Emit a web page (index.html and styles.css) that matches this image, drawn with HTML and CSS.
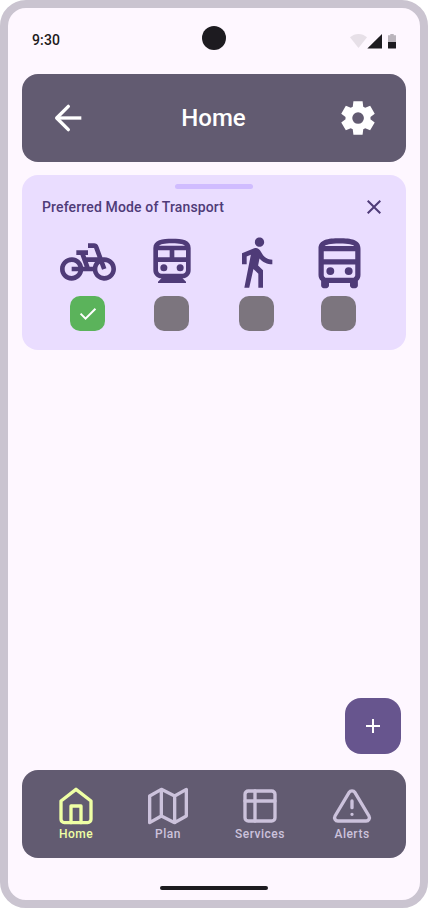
FILE: index.html
```html
<!DOCTYPE html>
<html lang="en">
<head>
<meta charset="utf-8">
<meta name="viewport" content="width=device-width">
<title>Home</title>
<link rel="stylesheet" href="styles.css">
</head>
<body>
<div class="phone">
  <div class="status">
    <span class="time">9:30</span>
    <span class="camera"></span>
    <svg class="status-icons" width="46" height="16" viewBox="0 0 46 16">
      <path d="M0 4.2C2.4 2.1 5.400 .9 8.500 .9s6.100 1.200 8.500 3.300L8.500 15z" fill="#1d1b20" fill-opacity=".1"/>
      <path d="M17.300 15.500L32 1v14.500z" fill="#1d1b20"/>
      <path d="M38 2.300h2.300V1h3.400v1.300H46V9h-8z" fill="#1d1b20" fill-opacity=".3"/>
      <path d="M38 9h8v6q0 .5-.5.5h-7q-.5 0-.5-.5z" fill="#1d1b20"/>
    </svg>
  </div>

  <header class="header">
    <svg width="40" height="40" viewBox="0 0 24 24" fill="none" stroke="currentColor" stroke-width="2" stroke-linejoin="round"><path d="M12.200 5l-7 7 7 7" stroke-linecap="round"/><path d="M5.500 12H20"/></svg>
    <h1>Home</h1>
    <svg width="40" height="40" viewBox="0 -960 960 960" fill="currentColor"><path d="m370-80-16-128q-13-5-24.500-12T307-235l-119 50L78-375l103-78q-1-7-1-13.500v-27q0-6.500 1-13.500L78-585l110-190 119 50q11-8 23-15t24-12l16-128h220l16 128q13 5 24.500 12t22.500 15l119-50 110 190-103 78q1 7 1 13.500v27q0 6.500-2 13.500l103 78-110 190-118-50q-11 8-23 15t-24 12L590-80H370Zm112-260q58 0 99-41t41-99q0-58-41-99t-99-41q-59 0-99.500 41T342-480q0 58 40.500 99t99.500 41Z"/></svg>
  </header>

  <section class="card">
    <div class="handle"></div>
    <div class="card-head">
      <h2>Preferred Mode of Transport</h2>
      <svg width="24" height="24" viewBox="0 0 24 24" fill="currentColor"><path d="M19 6.410L17.590 5 12 10.590 6.410 5 5 6.410 10.590 12 5 17.590 6.410 19 12 13.410 17.590 19 19 17.590 13.410 12z"/></svg>
    </div>
    <div class="modes">
      <div class="mode">
        <div class="glyph"><svg width="56" height="56" viewBox="0 0 24 24" fill="currentColor"><path d="M18.180 10l-1.700-4.680C16.190 4.530 15.440 4 14.600 4H12v2h2.600l1.460 4h-4.810l-.36-1H12V7H7v2h1.750l1.820 5H9.900c-.44-2.230-2.310-3.880-4.650-3.990C2.450 9.870 0 12.200 0 15c0 2.800 2.200 5 5 5 2.460 0 4.450-1.690 4.900-4h4.200c.44 2.230 2.310 3.880 4.650 3.990 2.800.13 5.250-2.190 5.250-5 0-2.800-2.200-5-5-5h-.82zM7.820 16c-.4 1.170-1.490 2-2.820 2-1.680 0-3-1.320-3-3s1.320-3 3-3c1.330 0 2.420.83 2.820 2H5v2h2.820zm6.280-2h-1.400l-.73-2H15c-.44.58-.76 1.250-.9 2zm4.900 4c-1.680 0-3-1.320-3-3 0-.93.41-1.730 1.050-2.280l.96 2.640 1.880-.68-.97-2.670c.02 0 .05-.01.08-.01 1.680 0 3 1.320 3 3s-1.320 3-3 3z"/></svg></div>
        <div class="box checked"><svg width="24" height="24" viewBox="0 -960 960 960" fill="currentColor"><path d="M382-240 154-468l57-57 171 171 367-367 57 57-424 424Z"/></svg></div>
      </div>
      <div class="mode">
        <div class="glyph"><svg width="56" height="56" viewBox="0 0 24 24" fill="currentColor"><path d="M12 2C8 2 4 2.500 4 6v9.500C4 17.430 5.570 19 7.500 19L6 20.500v.5h12v-.5L16.500 19c1.930 0 3.500-1.570 3.500-3.500V6c0-3.500-3.580-4-8-4zm0 2c3.510 0 4.960.48 5.570 1H6.430c.61-.52 2.060-1 5.570-1zM6 7h5v3H6V7zm12 8.500c0 .83-.67 1.500-1.500 1.500h-9c-.83 0-1.500-.67-1.500-1.500V12h12v3.500zm0-5.500h-5V7h5v3z"/><circle cx="8.500" cy="14.500" r="1.500"/><circle cx="15.500" cy="14.500" r="1.500"/></svg></div>
        <div class="box"></div>
      </div>
      <div class="mode">
        <div class="glyph walk"><svg width="56" height="56" viewBox="0 0 24 24" fill="currentColor"><path d="M13.500 5.500c1.100 0 2-.9 2-2s-.9-2-2-2-2 .9-2 2 .9 2 2 2zM9.800 8.900L7 23h2.100l1.800-8 2.100 2v6h2v-7.500l-2.100-2 .6-3C14.800 12 16.800 13 19 13v-2c-1.900 0-3.500-1-4.300-2.400l-1-1.600c-.4-.6-1-1-1.700-1-.3 0-.5.1-.8.1L6 8.300V13h2V9.600l1.800-.7"/></svg></div>
        <div class="box"></div>
      </div>
      <div class="mode">
        <div class="glyph bus"><svg width="63" height="63" viewBox="0 0 24 24" fill="currentColor"><path d="M12 2c-4.420 0-8 .5-8 4v10c0 .88.39 1.670 1 2.220V20c0 .55.45 1 1 1h1c.55 0 1-.45 1-1v-1h8v1c0 .55.45 1 1 1h1c.55 0 1-.45 1-1v-1.780c.61-.55 1-1.340 1-2.220V6c0-3.500-3.580-4-8-4zm5.660 2.990H6.340C6.890 4.460 8.310 4 12 4s5.110.46 5.660.99zm.34 2V10H6V6.990h12zm-.34 9.740l-.29.27H6.630l-.29-.27C6.210 16.620 6 16.370 6 16v-4h12v4c0 .37-.21.62-.34.73z"/><circle cx="8.500" cy="14.500" r="1.500"/><circle cx="15.500" cy="14.500" r="1.500"/></svg></div>
        <div class="box"></div>
      </div>
    </div>
  </section>

  <main class="content">
    <button class="fab" aria-label="Add"><svg width="24" height="24" viewBox="0 0 24 24" fill="currentColor"><path d="M19 13h-6v6h-2v-6H5v-2h6V5h2v6h6z"/></svg></button>
  </main>

  <nav class="nav">
    <a class="item active"><svg viewBox="0 0 24 24"><path d="M3 9l9-7 9 7v11a2 2 0 0 1-2 2H5a2 2 0 0 1-2-2z"/><path d="M9 22V12h6v10"/></svg><span>Home</span></a>
    <a class="item"><svg viewBox="0 0 24 24"><path d="M1 6v16l7-4 8 4 7-4V2l-7 4-8-4-7 4zM8 2v16M16 6v16"/></svg><span>Plan</span></a>
    <a class="item"><svg viewBox="0 0 24 24"><rect x="3" y="3" width="18" height="18" rx="2"/><path d="M3 9h18M9 3v18"/></svg><span>Services</span></a>
    <a class="item"><svg viewBox="0 0 24 24"><path d="M10.290 3.860L1.820 18a2 2 0 0 0 1.710 3h16.940a2 2 0 0 0 1.710-3L13.710 3.860a2 2 0 0 0-3.420 0zM12 9v4M12 17h.01"/></svg><span>Alerts</span></a>
  </nav>
  <div class="gesture"></div>
</div>
</body>
</html>
```
FILE: styles.css
```css
* { box-sizing: border-box; }
body { margin: 0; background: #fff; font-family: Roboto, sans-serif; }
h1, h2 { margin: 0; font-weight: 500; }
svg { display: block; flex: none; }

.phone {
  width: 428px;
  height: 908px;
  border: 8px solid #cac4d0;
  border-radius: 26px;
  background: #fef7ff;
  padding: 0 14px;
  display: flex;
  flex-direction: column;
}

.status {
  height: 66px;
  padding: 18px 10px 0;
  display: grid;
  grid-template-columns: 1fr 24px 1fr;
  align-items: start;
  color: #1d1b20;
}
.time { font-size: 14px; font-weight: 500; line-height: 20px; letter-spacing: .14px; padding-top: 4px; }
.camera { width: 24px; height: 24px; border-radius: 50%; background: #1d1b20; }
.status-icons { justify-self: end; margin-top: 7px; }

.header {
  height: 88px;
  border-radius: 16px;
  background: #625b71;
  color: #fff;
  padding: 0 28px 0 26px;
  display: flex;
  align-items: center;
  justify-content: space-between;
}
.header h1 { font-size: 24px; line-height: 32px; padding-left: 1px; }

.card {
  height: 175px;
  margin-top: 13px;
  border-radius: 16px;
  background: #eaddff;
  color: #4f3b78;
  padding-top: 9px;
}
.handle { width: 78px; height: 5px; border-radius: 3px; background: #d0bcff; margin: 0 auto; }
.card-head {
  height: 24px;
  margin-top: 6px;
  padding: 0 20px;
  display: flex;
  justify-content: space-between;
  align-items: center;
}
.card-head h2 { font-size: 14px; line-height: 20px; letter-spacing: .14px; }
.modes {
  display: grid;
  grid-template-columns: 84px 84px 86px 78px;
  padding-left: 24px;
  margin: 13px 0 0 -.5px;
}
.mode { display: flex; flex-direction: column; align-items: center; }
.glyph { height: 64px; display: flex; align-items: center; padding-bottom: 4px; }
.walk { padding-right: 1px; }
.bus { padding: 0 0 0 1px; }
.box {
  width: 35px;
  height: 35px;
  border-radius: 10px;
  background: #7c757e;
  display: flex;
  align-items: center;
  justify-content: center;
}
.checked { background: #5bb35b; color: #fff; }

.content { flex: 1; display: flex; align-items: flex-end; justify-content: flex-end; padding: 0 5px 16px; }
.fab {
  width: 56px;
  height: 56px;
  padding: 0;
  border: 0;
  border-radius: 16px;
  background: #67558e;
  color: #fff;
  display: flex;
  align-items: center;
  justify-content: center;
}

.nav {
  height: 88px;
  border-radius: 16px;
  background: #625b71;
  padding: 16px 8px 0;
  display: grid;
  grid-template-columns: repeat(4, 1fr);
}
.item { display: flex; flex-direction: column; align-items: center; color: #ccc2dc; }
.item svg {
  width: 40px;
  height: 40px;
  fill: none;
  stroke: currentColor;
  stroke-width: 2;
  stroke-linecap: round;
  stroke-linejoin: round;
}
.item span { font-size: 12px; font-weight: 500; line-height: 16px; letter-spacing: .5px; }
.active { color: #efffa5; }

.gesture { width: 108px; height: 4px; border-radius: 2px; background: #1d1b20; margin: 28px auto 10px; }
```
